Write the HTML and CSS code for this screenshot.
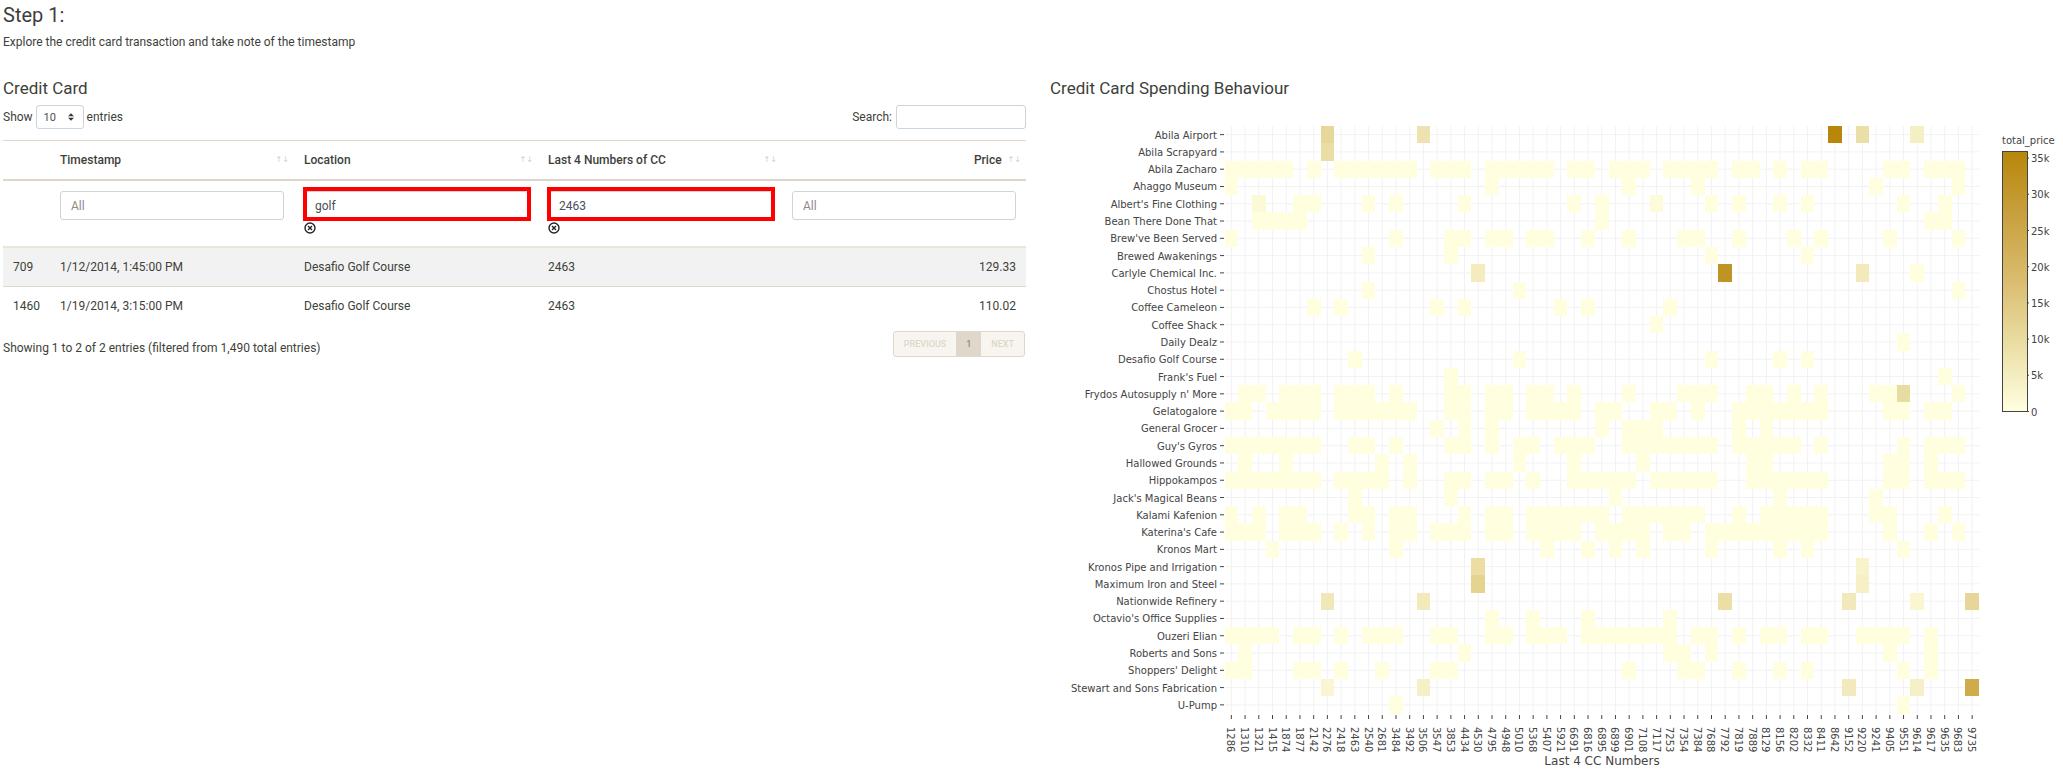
FILE: index.html
```html
<!DOCTYPE html>
<html lang="en">
<head>
<meta charset="utf-8">
<title>Credit Card</title>
<link rel="stylesheet" href="styles.css">
</head>
<body>
<header class="intro">
  <h3 class="step-title">Step 1:</h3>
  <p class="step-text">Explore the credit card transaction and take note of the timestamp</p>
</header>
<main class="columns">
  <section class="panel">
    <h4 class="panel-title">Credit Card</h4>
    <div class="toolbar">
      <label class="length">Show
        <span class="select-wrap">
          <select class="field length-select"><option>10</option><option>25</option><option>50</option></select>
          <svg class="select-arrows" viewBox="0 0 8 10" aria-hidden="true"><path d="M4 0 8 4H0zM4 10 0 6h8z"/></svg>
        </span>
        entries</label>
      <label class="search">Search: <input class="field search-input" type="search"></label>
    </div>
    <table class="data">
      <colgroup><col class="col-index"><col><col><col><col></colgroup>
      <thead>
        <tr class="head-row">
          <th></th>
          <th><span class="head">Timestamp<span class="sort">↑↓</span></span></th>
          <th><span class="head">Location<span class="sort">↑↓</span></span></th>
          <th><span class="head">Last 4 Numbers of CC<span class="sort">↑↓</span></span></th>
          <th><span class="head head-right">Price<span class="sort">↑↓</span></span></th>
        </tr>
        <tr class="filter-row">
          <td></td>
          <td><input class="field filter" type="search" placeholder="All" aria-label="Filter timestamp"></td>
          <td><div class="marked"><input class="field filter" type="text" value="golf" aria-label="Filter location"></div>
            <button class="clear" type="button" aria-label="Clear location"><svg viewBox="0 0 12 12"><circle cx="6" cy="6" r="5"/><path d="M4 4l4 4M8 4L4 8"/></svg></button></td>
          <td><div class="marked"><input class="field filter" type="text" value="2463" aria-label="Filter card number"></div>
            <button class="clear" type="button" aria-label="Clear card number"><svg viewBox="0 0 12 12"><circle cx="6" cy="6" r="5"/><path d="M4 4l4 4M8 4L4 8"/></svg></button></td>
          <td><input class="field filter" type="search" placeholder="All" aria-label="Filter price"></td>
        </tr>
      </thead>
      <tbody>
        <tr class="odd"><td>709</td><td>1/12/2014, 1:45:00 PM</td><td>Desafio Golf Course</td><td>2463</td><td class="num">129.33</td></tr>
        <tr><td>1460</td><td>1/19/2014, 3:15:00 PM</td><td>Desafio Golf Course</td><td>2463</td><td class="num">110.02</td></tr>
      </tbody>
    </table>
    <div class="footer">
      <span class="info">Showing 1 to 2 of 2 entries (filtered from 1,490 total entries)</span>
      <nav class="pager"><button class="page" type="button">Previous</button><button class="page current" type="button">1</button><button class="page" type="button">Next</button></nav>
    </div>
  </section>
  <section class="panel">
    <h4 class="panel-title">Credit Card Spending Behaviour</h4>
    <svg id="heatmap" class="heatmap" viewBox="1050 110 1013 663" role="img" aria-label="Spending by location and card">
      <defs><linearGradient id="scale" x1="0" y1="0" x2="0" y2="1"><stop offset="0" stop-color="#b8860b"/><stop offset=".25" stop-color="#c9a13f"/><stop offset=".5" stop-color="#dabd70"/><stop offset=".75" stop-color="#ebdfa5"/><stop offset="1" stop-color="#ffffe0"/></linearGradient></defs>
    </svg>
  </section>
</main>
<script src="chart.js"></script>
</body>
</html>
```

FILE: styles.css
```css
* { box-sizing: border-box; }
body {
  margin: 0;
  padding: 3px 0 0 3px;
  background: #fff;
  color: #3e3f3a;
  font-family: Roboto, sans-serif;
  font-size: 12px;
  line-height: 18px;
}
.step-title { margin: 0; font-size: 20px; font-weight: 400; line-height: 24px; }
.step-text { margin: 6px 0 0; }
.columns {
  display: grid;
  grid-template-columns: 1023fr 1013fr;
  column-gap: 24px;
  margin-top: 26px;
}
.panel { min-width: 0; }
.panel-title { margin: 0; font-size: 17px; font-weight: 400; line-height: 22px; }
.toolbar { display: flex; justify-content: space-between; margin-top: 6px; }
.length, .search { display: flex; align-items: center; gap: 3px; }
.search { gap: 4px; }
.field {
  border: 1px solid #ced4da;
  border-radius: 3px;
  background: #fff;
  color: #495057;
  font-family: inherit;
  font-size: 12px;
}
.select-wrap { position: relative; display: block; }
.length-select { display: block; appearance: none; width: 48px; height: 24px; padding: 0 7px; font-size: 11px; }
.select-arrows { position: absolute; top: 8px; right: 10px; width: 6px; height: 8px; fill: #343a40; pointer-events: none; }
.search-input { width: 130px; height: 24px; }
.data {
  width: 100%;
  margin-top: 11px;
  border-collapse: collapse;
  table-layout: fixed;
}
.col-index { width: 47px; }
.data th, .data td { padding: 10px; text-align: left; vertical-align: top; }
.head-row { border-top: 1px solid #dfd7ca; border-bottom: 2px solid #dfd7ca; }
.data th { font-weight: 500; padding-right: 5px; }
.head { display: flex; justify-content: space-between; }
.head-right { justify-content: flex-end; gap: 6px; }
.sort { color: #ccc; font-family: "DejaVu Sans", sans-serif; font-size: 8px; }
.filter-row { height: 67px; border-bottom: 2px solid #ebe5dc; }
.filter { display: block; width: 100%; height: 29px; padding: 0 10px; }
.filter::placeholder { color: #8e8c84; }
.marked { position: relative; }
.marked::after { content: ""; position: absolute; inset: -4px -3px -1px -1px; border: 4px solid #f00; pointer-events: none; }
.clear { display: block; margin: 2px 0 0; padding: 0; border: 0; background: none; }
.clear svg { display: block; width: 12px; height: 12px; fill: none; stroke: #212529; stroke-width: 1.4; }
.data .num { text-align: right; }
.odd { background: #f2f2f2; border-bottom: 1px solid #dfd7ca; }
.footer { display: flex; justify-content: space-between; padding: 6px 1px 0 0; }
.info { padding-top: 8px; }
.pager { display: flex; height: 26px; border: 1px solid #dfd7ca; border-radius: 3px; background: #f8f5f0; overflow: hidden; }
.page { padding: 0 10px; border: 0; background: none; color: #dfd7ca; font: 500 9px Roboto, sans-serif; text-transform: uppercase; }
.current { background: #dfd7ca; color: #8e8c84; }
.heatmap { display: block; width: 100%; margin-top: 11px; }
.heatmap text { fill: #444; font-family: "DejaVu Sans", Verdana, sans-serif; font-size: 10px; }
.heatmap .axis-title { font-size: 12px; }
.grid-line { stroke: #f2f2f2; stroke-width: 1; }
.tick { stroke: #444; stroke-width: 1; }
.scale-bar { fill: url(#scale); stroke: #444; stroke-width: 1; }
```

FILE: chart.js
```js
const cards = "1286 1310 1321 1415 1874 1877 2142 2276 2418 2463 2540 2681 3484 3492 3506 3547 3853 4434 4530 4795 4948 5010 5368 5407 5921 6691 6816 6895 6899 6901 7108 7117 7253 7354 7384 7688 7792 7819 7889 8129 8156 8202 8332 8411 8642 9152 9220 9241 9405 9551 9614 9617 9635 9683 9735".split(" ");

// Each row: place, then card index ranges; "index:colour" marks a larger total.
const rows = [
  ["Abila Airport", "7:#e6d89b 14:#eee3b0 44:#b8860b 46:#e9dfa7 50:#f5efc4"],
  ["Abila Scrapyard", "7:#eadea6"],
  ["Abila Zacharo", "0-4 6 8-13 15-17 19-23 25-26 28-30 32-35 37-38 40 42-43 48-49 51-53"],
  ["Ahaggo Museum", "0 19 29 34 47 53"],
  ["Albert's Fine Clothing", "2:#fbfad6 5-6 10 12 17 25 27 31:#fdfcda 35 37 40 42 49 52"],
  ["Bean There Done That", "2-5 27 51-52"],
  ["Brew've Been Served", "0 12 16-17 19-20 22-23 26 29 33-34 37 41 43 48 53"],
  ["Brewed Awakenings", "10 16 35 42"],
  ["Carlyle Chemical Inc.", "18:#f4ebbf 36:#c09423 46:#f3eabc 50"],
  ["Chostus Hotel", "10 21 53"],
  ["Coffee Cameleon", "6 8 15 17 24 26 32"],
  ["Coffee Shack", "31"],
  ["Daily Dealz", "49"],
  ["Desafio Golf Course", "9 21 35 40 42"],
  ["Frank's Fuel", "16 52"],
  ["Frydos Autosupply n' More", "1-2 4-6 8-10 12 16-17 19-20 22-23 25 29 33-35 38-39 41 43 47-48 49:#e9dca2 53"],
  ["Gelatogalore", "0-1 3-6 8-13 16-17 19-20 22-25 27-28 31-32 34 37-43 48-49 51-52"],
  ["General Grocer", "15 17 19 27 29-31 37 39"],
  ["Guy's Gyros", "0-6 9-10 12 16-17 19 21-22 24-26 29-35 37-41 43 49 51-53"],
  ["Hallowed Grounds", "1 4 11 13 21 25 30 38-39 48-49 51"],
  ["Hippokampos", "0-6 8-11 13 16-17 19-20 22 25-29 31-35 38-43 48-49 51-53"],
  ["Jack's Magical Beans", "9 16 28 40 47"],
  ["Kalami Kafenion", "0 2 4-5 9-10 12-13 17 19-20 22-27 29-34 37 39-43 47-48 52"],
  ["Katerina's Cafe", "0-2 4-6 8 10 12-13 15-17 19-20 22-25 27-30 32-33 35-43 48 51 53"],
  ["Kronos Mart", "3 12 23 26 28 30 35 40 42 49"],
  ["Kronos Pipe and Irrigation", "18:#ebdda3 46:#f8f3cb"],
  ["Maximum Iron and Steel", "18:#e5d390 46:#f7f0c6"],
  ["Nationwide Refinery", "7:#f1e8b9 14:#f3eabc 36:#ecdfa5 45:#f1e9bb 50:#faf6d0 54:#e7d697"],
  ["Octavio's Office Supplies", "19 22 26 32"],
  ["Ouzeri Elian", "0-3 5-6 8 10-12 15-16 19-20 22-24 26-32 34-35 37 39-40 42-43 46-49 51"],
  ["Roberts and Sons", "1 17 32-33 35 48 51"],
  ["Shoppers' Delight", "0-1 5-6 8 11 15-16 29 33-34 37 40 42 49 51"],
  ["Stewart and Sons Fabrication", "7:#faf5d3 14:#f6f0c8 45:#f2eabd 50:#f6f0c8 54:#cfab4c"],
  ["U-Pump", "12 49"]
];

const plot = { left: 1224.5, right: 1979, top: 126, bottom: 713.5 };
const stepX = (plot.right - plot.left) / cards.length;
const stepY = (plot.bottom - plot.top) / rows.length;
const svg = document.getElementById("heatmap");

function add(name, attrs, text) {
  const el = document.createElementNS("http://www.w3.org/2000/svg", name);
  for (const key in attrs) el.setAttribute(key, attrs[key]);
  if (text) el.textContent = text;
  svg.appendChild(el);
}
function line(cls, x1, y1, x2, y2) {
  add("line", { class: cls, x1, y1, x2, y2 });
}
const midX = i => plot.left + stepX * (i + 0.5);
const midY = i => plot.top + stepY * (i + 0.5);

cards.forEach((card, i) => line("grid-line", midX(i), plot.top, midX(i), plot.bottom));
rows.forEach((row, i) => line("grid-line", plot.left, midY(i), plot.right, midY(i)));

rows.forEach(([place, cells], r) => {
  const y = Math.round(plot.top + stepY * r);
  const height = Math.round(plot.top + stepY * (r + 1)) - y;
  cells.split(" ").forEach(cell => {
    const [range, fill = "#ffffdf"] = cell.split(":");
    const [from, to = from] = range.split("-").map(Number);
    const x = Math.round(plot.left + stepX * from);
    const width = Math.round(plot.left + stepX * (to + 1)) - x;
    add("rect", { x, y, width, height, fill });
  });
  line("tick", 1220, midY(r), 1224, midY(r));
  add("text", { x: 1217, y: midY(r) + 4, "text-anchor": "end" }, place);
});

cards.forEach((card, i) => {
  line("tick", midX(i), 715, midX(i), 719);
  add("text", { transform: `translate(${midX(i) - 4} 727) rotate(90)` }, card);
});
add("text", { class: "axis-title", x: 1602, y: 765, "text-anchor": "middle" }, "Last 4 CC Numbers");

add("text", { x: 2002, y: 144 }, "total_price");
add("rect", { class: "scale-bar", x: 2002.5, y: 151.5, width: 25, height: 260 });
["0", "5k", "10k", "15k", "20k", "25k", "30k", "35k"].forEach((label, i) => {
  const y = 411.5 - i * 36.2;
  line("tick", 2027, y, 2029, y);
  add("text", { x: 2031, y: y + 4 }, label);
});
```
